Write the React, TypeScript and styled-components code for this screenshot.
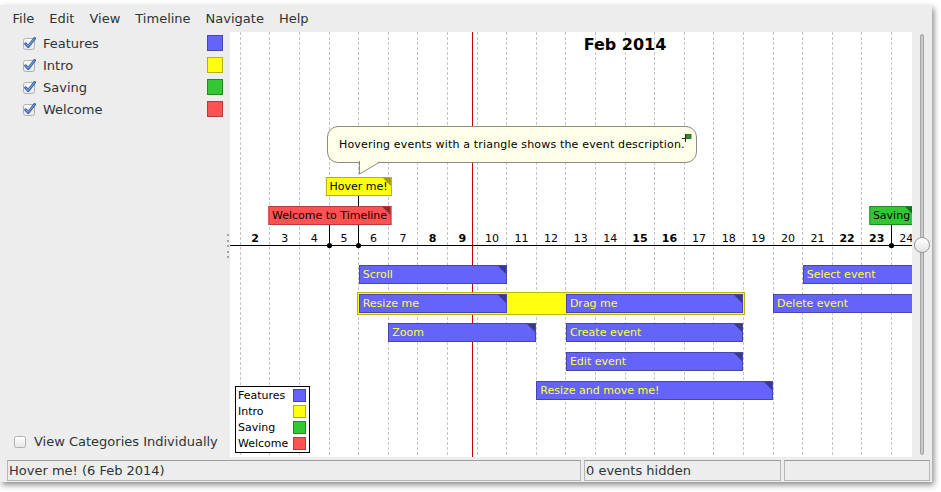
import React from 'react';
import styled, { createGlobalStyle } from 'styled-components';

const GlobalStyle = createGlobalStyle`
  html, body {
    margin: 0;
    padding: 0;
    background: #ffffff;
  }
  body {
    font-family: "DejaVu Sans", "Liberation Sans", sans-serif;
    color: #2e3436;
  }
`;

// timeline geometry: x of Feb 2, 00:00 inside the canvas and one day in px
const ORIGIN = 10.3;
const DAY = 29.6;
const dayX = (d: number) => ORIGIN + (d - 2) * DAY;
const crisp = (v: number) => Math.floor(v) + 0.5;

const CANVAS_W = 682;
const CANVAS_H = 425;
const AXIS_Y = 213;
const LANE_TOP = [233, 262, 291, 320, 349];

type CatName = 'Features' | 'Intro' | 'Saving' | 'Welcome';

const cats: Record<CatName, { fill: string; border: string; corner: string; text: string }> = {
  Features: { fill: '#6464fa', border: '#4646b0', corner: '#3a3a8c', text: '#ffff3c' },
  Intro: { fill: '#ffff10', border: '#b4b400', corner: '#9c9c00', text: '#000000' },
  Saving: { fill: '#33c833', border: '#208a20', corner: '#1c6a1c', text: '#000000' },
  Welcome: { fill: '#ff5252', border: '#b43c3c', corner: '#8c2a2a', text: '#000000' },
};

const catOrder: CatName[] = ['Features', 'Intro', 'Saving', 'Welcome'];

const pointEvents: { text: string; day: number; top: number; cat: CatName }[] = [
  { text: 'Welcome to Timeline', day: 5, top: 174, cat: 'Welcome' },
  { text: 'Hover me!', day: 6, top: 145, cat: 'Intro' },
  { text: 'Saving', day: 24, top: 174, cat: 'Saving' },
];

const periodEvents: { text: string; from: number; to: number; lane: number }[] = [
  { text: 'Scroll', from: 6, to: 11, lane: 0 },
  { text: 'Select event', from: 21, to: 25, lane: 0 },
  { text: 'Resize me', from: 6, to: 11, lane: 1 },
  { text: 'Drag me', from: 13, to: 19, lane: 1 },
  { text: 'Delete event', from: 20, to: 25, lane: 1 },
  { text: 'Zoom', from: 7, to: 12, lane: 2 },
  { text: 'Create event', from: 13, to: 19, lane: 2 },
  { text: 'Edit event', from: 13, to: 19, lane: 3 },
  { text: 'Resize and move me!', from: 12, to: 20, lane: 4 },
];

const weekend = new Set([2, 8, 9, 15, 16, 22, 23]);
const days = Array.from({ length: 23 }, (_, i) => i + 2);

const Page = styled.div`
  width: 941px;
  height: 492px;
  box-sizing: border-box;
  padding: 5px 9px 10px 0;
  background: #ffffff;
`;

const Window = styled.div`
  width: 932px;
  height: 477px;
  display: flex;
  flex-direction: column;
  background: #ededed;
  box-shadow: 2px 3px 6px rgba(0, 0, 0, 0.45);
`;

const MenuBar = styled.div`
  height: 27px;
  display: flex;
  align-items: center;
  padding-left: 5px;
  font-size: 13px;
`;

const MenuItem = styled.span`
  padding: 0 7.5px;
  line-height: 27px;
`;

const Body = styled.div`
  height: 428px;
  display: flex;
`;

const Sidebar = styled.div`
  width: 225px;
  display: flex;
  flex-direction: column;
  justify-content: space-between;
  padding-bottom: 8px;
  box-sizing: border-box;
  font-size: 13px;
`;

const CategoryRow = styled.div`
  height: 22px;
  display: flex;
  align-items: center;
  padding: 0 2px 0 23px;
`;

const RowLabel = styled.span`
  flex: 1;
  margin-left: 7px;
`;

const Swatch = styled.span<{ $fill: string; $border: string; $size: number }>`
  width: ${p => p.$size}px;
  height: ${p => p.$size}px;
  box-sizing: border-box;
  background: ${p => p.$fill};
  border: 1px solid ${p => p.$border};
`;

const ToggleRow = styled.div`
  height: 22px;
  display: flex;
  align-items: center;
  padding-left: 14px;
`;

const ToggleLabel = styled.span`
  margin-left: 7px;
`;

const Sash = styled.div`
  width: 5px;
  display: flex;
  flex-direction: column;
  align-items: center;
  justify-content: center;
  gap: 3.5px;
`;

const SashDot = styled.span`
  width: 2px;
  height: 2px;
  background: #a4a4a4;
`;

const Canvas = styled.div`
  position: relative;
  width: ${CANVAS_W}px;
  height: ${CANVAS_H}px;
  overflow: hidden;
  background: #ffffff;
  font-size: 11px;
`;

const Grid = styled.svg`
  position: absolute;
  left: 0;
  top: 0;
`;

const MonthTitle = styled.div`
  position: absolute;
  left: 334px;
  top: 3px;
  width: 122px;
  text-align: center;
  white-space: nowrap;
  font-size: 16px;
  font-weight: bold;
  color: #000;
`;

const EventBox = styled.div<{ $fill: string; $border: string; $corner: string; $text: string }>`
  position: absolute;
  height: 19px;
  box-sizing: border-box;
  padding: 0 3px;
  background: ${p => p.$fill};
  border: 1px solid ${p => p.$border};
  color: ${p => p.$text};
  line-height: 17px;
  white-space: nowrap;
  overflow: hidden;

  &::after {
    content: '';
    position: absolute;
    right: 0;
    top: 0;
    border-style: solid;
    border-width: 0 8px 8px 0;
    border-color: transparent ${p => p.$corner} transparent transparent;
  }
`;

const PointBox = styled(EventBox)`
  transform: translateX(-50%);
`;

const Container = styled.div`
  position: absolute;
  box-sizing: border-box;
  background: ${cats.Intro.fill};
  border: 1px solid #b8b800;
`;

const Balloon = styled.div`
  position: absolute;
  left: 97px;
  top: 94px;
  width: 370px;
  height: 37px;
  box-sizing: border-box;
  padding-left: 11px;
  background: #ffffea;
  border: 1px solid #8c8c84;
  border-radius: 11px;
  color: #000;
  line-height: 35px;
  letter-spacing: 0.17px;
  white-space: nowrap;
`;

const BalloonTail = styled.svg`
  position: absolute;
  left: 31px;
  top: 34px;
`;

const BalloonPin = styled.svg`
  position: absolute;
  right: 4px;
  top: 6px;
`;

const Legend = styled.div`
  position: absolute;
  left: 5px;
  top: 354px;
  width: 75px;
  height: 67px;
  box-sizing: border-box;
  padding: 0 2px;
  background: #fff;
  border: 1px solid #000;
  color: #000;
`;

const LegendRow = styled.div`
  height: 16px;
  display: flex;
  align-items: center;
  justify-content: space-between;
  padding-right: 1px;
`;

const SliderColumn = styled.div`
  position: relative;
  width: 20px;
  display: flex;
  justify-content: center;
  padding-top: 2px;
  box-sizing: border-box;
`;

const SliderTrack = styled.div`
  width: 4px;
  height: 421px;
  box-sizing: border-box;
  background: #c9c9c9;
  border: 1px solid #a6a6a6;
  border-radius: 2px;
`;

const SliderKnob = styled.div`
  position: absolute;
  left: 2px;
  top: 205px;
  width: 16px;
  height: 16px;
  box-sizing: border-box;
  border-radius: 50%;
  border: 1px solid #9a9a9a;
  background: linear-gradient(#ffffff, #e2e2e2);
`;

const StatusBar = styled.div`
  height: 21px;
  display: flex;
  gap: 3px;
  padding: 0 2px 0 7px;
  font-size: 13px;
`;

const StatusPanel = styled.div<{ $width: number }>`
  width: ${p => p.$width}px;
  box-sizing: border-box;
  padding-left: 1px;
  border: 1px solid #b6b6b6;
  border-top-color: #9c9c9c;
  line-height: 19px;
  white-space: nowrap;
`;

const CheckIcon: React.FC<{ checked?: boolean }> = ({ checked }) => (
  <svg width="13" height="13" viewBox="0 0 13 13">
    <defs>
      <linearGradient id="cbfill" x1="0" y1="0" x2="0" y2="1">
        <stop offset="0" stopColor="#ffffff" />
        <stop offset="1" stopColor="#e6e6e6" />
      </linearGradient>
    </defs>
    <rect x="0.5" y="1.5" width="11" height="11" rx="2" fill="url(#cbfill)" stroke="#b0b0b0" />
    {checked && (
      <>
        <path d="M2.6 6.8 L5.2 9.6 L11.6 1.4" fill="none" stroke="#3b66a8" strokeWidth="2.8" strokeLinecap="round" strokeLinejoin="round" />
        <path d="M2.9 6.9 L5.2 9.3 L11.2 1.7" fill="none" stroke="#8fb4e6" strokeWidth="0.9" strokeLinecap="round" strokeLinejoin="round" />
      </>
    )}
  </svg>
);

const TimelineGrid: React.FC = () => (
  <Grid width={CANVAS_W} height={CANVAS_H}>
    {days.concat([25]).map(d => (
      <line key={d} x1={crisp(dayX(d))} y1={0} x2={crisp(dayX(d))} y2={CANVAS_H} stroke="#c4c4c4" strokeDasharray="3 2" />
    ))}
    <line x1={crisp(242.3)} y1={0} x2={crisp(242.3)} y2={CANVAS_H} stroke="#c80000" />
    <line x1={0} y1={AXIS_Y + 0.5} x2={CANVAS_W} y2={AXIS_Y + 0.5} stroke="#000" />
    {pointEvents.map(e => {
      const x = crisp(dayX(e.day));
      return (
        <g key={e.text}>
          <line x1={x} y1={e.top + 19} x2={x} y2={AXIS_Y} stroke="#000" />
          <circle cx={x} cy={AXIS_Y + 0.5} r={2.6} fill="#000" />
        </g>
      );
    })}
    {days.map(d => (
      <text
        key={d}
        x={dayX(d) + DAY / 2}
        y={210}
        textAnchor="middle"
        fontSize={11}
        fontWeight={weekend.has(d) ? 'bold' : 'normal'}
        fontFamily='"DejaVu Sans", sans-serif'
        fill="#000"
      >
        {d}
      </text>
    ))}
  </Grid>
);

const App: React.FC = () => {
  const f = cats.Features;
  return (
    <Page>
      <GlobalStyle />
      <Window>
        <MenuBar>
          {['File', 'Edit', 'View', 'Timeline', 'Navigate', 'Help'].map(m => (
            <MenuItem key={m}>{m}</MenuItem>
          ))}
        </MenuBar>
        <Body>
          <Sidebar>
            <div>
              {catOrder.map(c => (
                <CategoryRow key={c}>
                  <CheckIcon checked />
                  <RowLabel>{c}</RowLabel>
                  <Swatch $fill={cats[c].fill} $border={cats[c].border} $size={16} />
                </CategoryRow>
              ))}
            </div>
            <ToggleRow>
              <CheckIcon />
              <ToggleLabel>View Categories Individually</ToggleLabel>
            </ToggleRow>
          </Sidebar>
          <Sash>
            {[0, 1, 2, 3, 4].map(i => (
              <SashDot key={i} />
            ))}
          </Sash>
          <Canvas>
            <TimelineGrid />
            <MonthTitle>Feb 2014</MonthTitle>

            <Container
              style={{
                left: dayX(6) - 2,
                top: LANE_TOP[1] - 2,
                width: dayX(19) - dayX(6) + 4,
                height: 23,
              }}
            />

            {periodEvents.map(e => (
              <EventBox
                key={e.text}
                $fill={f.fill}
                $border={f.border}
                $corner={f.corner}
                $text={f.text}
                style={{ left: dayX(e.from), top: LANE_TOP[e.lane], width: dayX(e.to) - dayX(e.from) }}
              >
                {e.text}
              </EventBox>
            ))}

            {pointEvents.map(e => {
              const c = cats[e.cat];
              return (
                <PointBox
                  key={e.text}
                  $fill={c.fill}
                  $border={c.border}
                  $corner={c.corner}
                  $text={c.text}
                  style={{ left: crisp(dayX(e.day)), top: e.top }}
                >
                  {e.text}
                </PointBox>
              );
            })}

            <Balloon>
              Hovering events with a triangle shows the event description.
              <BalloonTail width="24" height="16" viewBox="0 0 24 16">
                <polygon points="0.5,0 21,0 0.5,13" fill="#ffffea" />
                <polyline points="0.5,0 0.5,13 21,1" fill="none" stroke="#8c8c84" />
              </BalloonTail>
              <BalloonPin width="10" height="9" viewBox="0 0 10 9">
                <line x1="0" y1="5.5" x2="3.5" y2="5.5" stroke="#222" />
                <line x1="3.5" y1="1" x2="3.5" y2="9" stroke="#222" />
                <rect x="4" y="1.5" width="5" height="4" fill="#3a8a3a" stroke="#1d5a1d" strokeWidth="0.8" />
              </BalloonPin>
            </Balloon>

            <Legend>
              {catOrder.map(c => (
                <LegendRow key={c}>
                  <span>{c}</span>
                  <Swatch $fill={cats[c].fill} $border={cats[c].border} $size={13} />
                </LegendRow>
              ))}
            </Legend>
          </Canvas>
          <SliderColumn>
            <SliderTrack />
            <SliderKnob />
          </SliderColumn>
        </Body>
        <StatusBar>
          <StatusPanel $width={574}>Hover me! (6 Feb 2014)</StatusPanel>
          <StatusPanel $width={197}>0 events hidden</StatusPanel>
          <StatusPanel $width={146} />
        </StatusBar>
      </Window>
    </Page>
  );
};

export default App;
